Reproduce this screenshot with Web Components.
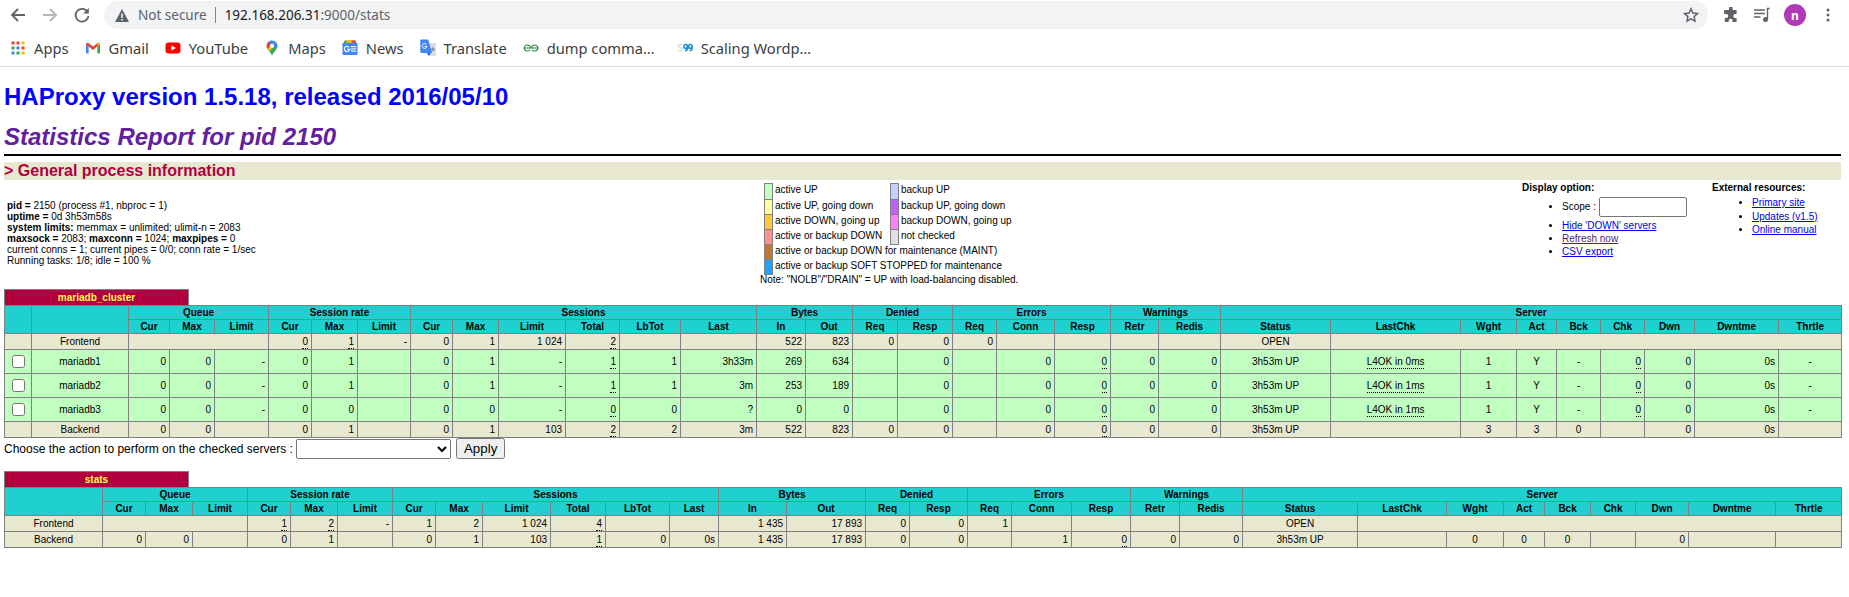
<!DOCTYPE html>
<html>
<head>
<meta charset="utf-8">
<title>Statistics Report for HAProxy</title>
<style>
    html, body { margin: 0; padding: 0; background: white; }
</style>
</head>
<body>
<browser-toolbar url-host="192.168.206.31" url-rest=":9000/stats"></browser-toolbar>
<bookmarks-bar>
    <bookmark-item icon="apps" label="Apps"></bookmark-item>
    <bookmark-item icon="gmail" label="Gmail"></bookmark-item>
    <bookmark-item icon="youtube" label="YouTube"></bookmark-item>
    <bookmark-item icon="maps" label="Maps"></bookmark-item>
    <bookmark-item icon="news" label="News"></bookmark-item>
    <bookmark-item icon="translate" label="Translate"></bookmark-item>
    <bookmark-item icon="gfg" label="dump comma…"></bookmark-item>
    <bookmark-item icon="sg" label="Scaling Wordp…" style="margin-left: 6px"></bookmark-item>
</bookmarks-bar>
<stats-page>
    <process-info slot="proc"></process-info>
    <status-legend slot="legend"></status-legend>
    <display-options slot="opts"></display-options>
    <stat-table proxy="mariadb_cluster"></stat-table>
    <stat-table proxy="stats"></stat-table>
</stats-page>

<script>
const ICONS = {
    apps: `<svg width="16" height="16" viewBox="0 0 16 16">
        <rect x="1.5" y="1.5" width="3" height="3" fill="#ea4335"/><rect x="6.5" y="1.5" width="3" height="3" fill="#ea4335"/><rect x="11.5" y="1.5" width="3" height="3" fill="#fbbc04"/>
        <rect x="1.5" y="6.5" width="3" height="3" fill="#34a853"/><rect x="6.5" y="6.5" width="3" height="3" fill="#4285f4"/><rect x="11.5" y="6.5" width="3" height="3" fill="#ea4335"/>
        <rect x="1.5" y="11.5" width="3" height="3" fill="#4285f4"/><rect x="6.5" y="11.5" width="3" height="3" fill="#34a853"/><rect x="11.5" y="11.5" width="3" height="3" fill="#fbbc04"/></svg>`,
    gmail: `<svg width="16" height="16" viewBox="0 0 16 16">
        <path d="M1 13.5V4l2.6 1.8v7.7H2a1 1 0 0 1-1-1z" fill="#4285f4"/><path d="M15 13.5V4l-2.6 1.8v7.7H14a1 1 0 0 0 1-1z" fill="#34a853"/>
        <path d="M1 4.5C1 3 2.6 2.4 3.6 3.2L8 6.6l4.4-3.4c1-.8 2.6-.2 2.6 1.3L12.4 6.6 8 9.9 3.6 6.6z" fill="#ea4335"/><path d="M12.4 3.2c1-.8 2.6-.2 2.6 1.3l-2.6 2.1z" fill="#fbbc04"/></svg>`,
    youtube: `<svg width="16" height="16" viewBox="0 0 16 16"><rect x="0.5" y="2.5" width="15" height="11" rx="3" fill="#f00"/><path d="M6.4 5.4v5.2L11 8z" fill="#fff"/></svg>`,
    maps: `<svg width="16" height="16" viewBox="0 0 16 16">
        <path d="M8 0.5a5.6 5.6 0 0 0-5.6 5.6c0 1.3.5 2.4 1.2 3.4l2.7-3.2z" fill="#ea4335"/>
        <path d="M8 0.5a5.6 5.6 0 0 1 4.3 2L9.6 5.6A2 2 0 0 0 6.5 4.3L4.2 2.2A5.6 5.6 0 0 1 8 0.5z" fill="#4285f4"/>
        <path d="M12.3 2.5a5.6 5.6 0 0 1 .6 6L6.4 6.3z" fill="#4285f4"/>
        <path d="M3.6 9.5l5.9-7 .1 4-3.2 3.7z" fill="#fbbc04"/>
        <path d="M3.6 9.5c1.5 2 3.6 3.4 4.4 6.2.7-2.6 3-4.2 4.7-7L9.6 6.5 5.9 10.8z" fill="#34a853"/>
        <circle cx="8" cy="6" r="2" fill="#fff"/></svg>`,
    news: `<svg width="18" height="18" viewBox="0 0 18 18">
        <rect x="2.5" y="0.5" width="13" height="5" rx="1" fill="#34a853"/><rect x="9" y="0.5" width="6.5" height="5" rx="1" fill="#ea4335"/><rect x="5" y="0" width="6" height="4" fill="#fbbc04"/>
        <rect x="0.5" y="3" width="17" height="14" rx="1.5" fill="#4285f4"/>
        <path d="M10 7.5h6M10 10h6M10 12.5h6" stroke="#e8f0fe" stroke-width="1.3"/><path d="M8 8.2a3 3 0 1 0 .6 2.4H5.800" fill="none" stroke="#fff" stroke-width="1.3"/></svg>`,
    translate: `<svg width="16" height="18" viewBox="0 0 16 18">
        <path d="M7 4h8a1 1 0 0 1 1 1v11a1 1 0 0 1-1 1H8.500z" fill="#dadce0"/><path d="M1 0.5h7.200L12 14H1.500A1.200 1.200 0 0 1 0.300 12.800V1.200A.8.8 0 0 1 1 .5z" fill="#4285f4"/>
        <path d="M7 14l1.500 3L11 14z" fill="#3367d6"/><path d="M6.600 5.600a2.400 2.400 0 1 0 .4 2H4.600" fill="none" stroke="#fff" stroke-width="1"/><path d="M12.800 7.600l.7 2h2l-1.600 1.200.6 2-1.700-1.200-1.600 1.200.6-2-1.600-1.200h2z" fill="#80868b"/></svg>`,
    gfg: `<svg width="16" height="16" viewBox="0 0 16 16"><g fill="none" stroke="#2f8d46" stroke-width="1.100"><path d="M0.600 8h14.800"/><path d="M7.700 8C7.200 5.800 5.800 5 4.400 5 2.600 5 1.300 6.300 1.300 8s1.300 3 3.100 3c1.100 0 2-.4 2.600-1.200"/><path d="M8.300 8c.5-2.200 1.900-3 3.300-3 1.800 0 3.100 1.300 3.100 3s-1.300 3-3.100 3c-1.100 0-2-.4-2.600-1.200"/></g></svg>`,
    sg: `<svg width="16" height="16" viewBox="0 0 16 16"><path d="M5 5.500C4.500 4.700 3.800 4.400 3 4.400 1.900 4.400 1.200 5 1.200 5.900c0 2 3.900 1.200 3.900 3.400 0 1-.9 1.700-2 1.700-.9 0-1.700-.4-2.200-1.200" fill="none" stroke="#cfd4d8" stroke-width="1.200"/><circle cx="8.700" cy="6.400" r="1.800" fill="none" stroke="#1a8fd6" stroke-width="1.500"/><path d="M10.500 6.400v1.800c0 1.300-.8 2.400-2.600 2.400" fill="none" stroke="#1a8fd6" stroke-width="1.500"/><circle cx="13.300" cy="6.400" r="1.800" fill="none" stroke="#1a8fd6" stroke-width="1.500"/><path d="M15.100 6.400v1.800c0 1.300-.8 2.400-2.600 2.400" fill="none" stroke="#1a8fd6" stroke-width="1.500"/></svg>`
};

class BrowserToolbar extends HTMLElement {
    constructor() {
        super();
        this.attachShadow({ mode: 'open' });
        this.shadowRoot.innerHTML = `
            <style>
                :host {
                    display: flex;
                    align-items: center;
                    height: 30px;
                    font-family: "Noto Sans", sans-serif;
                    font-size: 13.5px;
                    background: white;
                }
                .nav { width: 32px; height: 30px; display: flex; align-items: center; justify-content: center; flex: none; }
                .navs { display: flex; padding-left: 2px; margin-right: 6px; }
                #omnibox {
                    flex: none;
                    width: 1604px;
                    height: 28px;
                    border-radius: 14px;
                    background: #f1f3f4;
                    display: flex;
                    align-items: center;
                    padding-left: 10px;
                    box-sizing: border-box;
                }
                #warn { margin-right: 8px; display: flex; }
                #insecure { color: #5f6368; }
                #sep { width: 1px; height: 16px; background: #80868b; margin: 0 9px 0 8px; }
                #host { color: #202124; }
                #rest { color: #5f6368; }
                #star { margin-left: auto; margin-right: 9px; display: flex; }
                .tools { display: flex; align-items: center; }
                .tool { display: flex; justify-content: center; align-items: center; flex: none; }
                #avatar {
                    width: 22px; height: 22px; border-radius: 50%;
                    background: #af39b7; color: white;
                    font: bold 12px "Noto Sans", sans-serif;
                    display: flex; align-items: center; justify-content: center;
                }
            </style>
            <div class="navs">
                <div class="nav"><svg width="16" height="16" viewBox="0 0 16 16"><path d="M15 8H2.500M8 2L2 8l6 6" fill="none" stroke="#5f6368" stroke-width="1.900"/></svg></div>
                <div class="nav"><svg width="16" height="16" viewBox="0 0 16 16"><path d="M1 8h12.500M8 2l6 6-6 6" fill="none" stroke="#b3b6b9" stroke-width="1.900"/></svg></div>
                <div class="nav"><svg width="16" height="16" viewBox="0 0 16 16"><path d="M13.700 5.200A6.400 6.400 0 1 0 14.400 9" fill="none" stroke="#5f6368" stroke-width="1.800"/><path d="M14.800 1v5.600H9.200z" fill="#5f6368"/></svg></div>
            </div>
            <div id="omnibox">
                <span id="warn"><svg width="16" height="15" viewBox="0 0 16 15"><path d="M8 1L1 14h14zM7.200 5.500h1.600v4.500H7.200zM7.200 11h1.600v1.600H7.200z" fill="#5f6368" fill-rule="evenodd"/></svg></span>
                <span id="insecure">Not secure</span><span id="sep"></span>
                <span id="host"></span><span id="rest"></span>
                <span id="star"><svg width="16" height="16" viewBox="0 0 16 16"><path d="M8 1.800l1.900 4.200 4.600.5-3.400 3.100.9 4.500L8 11.800l-4 2.300.9-4.500L1.500 6.500 6.100 6z" fill="none" stroke="#5f6368" stroke-width="1.500"/></svg></span>
            </div>
            <div class="tools">
                <div class="tool" style="width:46px"><svg width="16" height="16" viewBox="0 0 16 16"><path d="M6 1.200a1.800 1.800 0 0 1 3.600 0V3h3a1 1 0 0 1 1 1v3h-1.400a2 2 0 0 0 0 4h1.400v3a1 1 0 0 1-1 1H9.500v-1.300a1.900 1.900 0 0 0-3.800 0V15H2.800a1 1 0 0 1-1-1v-3h1.400a2 2 0 0 0 0-4H1V4a1 1 0 0 1 1-1h4z" fill="#5f6368"/></svg></div>
                <div class="tool" style="width:17px"><svg width="17" height="16" viewBox="0 0 17 16"><path d="M0 3h11M0 6.500h11M0 10h6.500" stroke="#5f6368" stroke-width="1.400"/><path d="M15.500 1.500h-2V12" fill="none" stroke="#5f6368" stroke-width="1.400"/><circle cx="11.500" cy="12.500" r="2.500" fill="#5f6368"/></svg></div>
                <div class="tool" style="width:48px"><div id="avatar">n</div></div>
                <div class="tool" style="width:17px"><svg width="4" height="14" viewBox="0 0 4 14"><circle cx="2" cy="2" r="1.500" fill="#5f6368"/><circle cx="2" cy="7" r="1.500" fill="#5f6368"/><circle cx="2" cy="12" r="1.500" fill="#5f6368"/></svg></div>
            </div>
        `;
        this.shadowRoot.querySelector('#host').textContent = this.getAttribute('url-host');
        this.shadowRoot.querySelector('#rest').textContent = this.getAttribute('url-rest');
    }
}
customElements.define('browser-toolbar', BrowserToolbar);

class BookmarksBar extends HTMLElement {
    constructor() {
        super();
        this.attachShadow({ mode: 'open' });
        this.shadowRoot.innerHTML = `
            <style>
                :host {
                    display: flex;
                    align-items: center;
                    height: 35px;
                    padding: 0 0 1px 2px;
                    border-bottom: 1px solid #dadce0;
                    font-family: "Noto Sans", sans-serif;
                    font-size: 14.7px;
                    color: #3c4043;
                    background: white;
                }
            </style>
            <slot></slot>
        `;
    }
}
customElements.define('bookmarks-bar', BookmarksBar);

class BookmarkItem extends HTMLElement {
    constructor() {
        super();
        this.attachShadow({ mode: 'open' });
        const icon = ICONS[this.getAttribute('icon')] || '';
        this.shadowRoot.innerHTML = `
            <style>
                :host { display: flex; align-items: center; gap: 8px; padding: 0 8px; white-space: nowrap; }
                .ic { display: flex; width: 16px; justify-content: center; }
            </style>
            <span class="ic">${icon}</span><span id="label"></span>
        `;
        this.shadowRoot.querySelector('#label').textContent = this.getAttribute('label');
    }
}
customElements.define('bookmark-item', BookmarkItem);

class StatsPage extends HTMLElement {
    constructor() {
        super();
        this.attachShadow({ mode: 'open' });
        this.shadowRoot.innerHTML = `
            <style>
                :host {
                    display: block;
                    padding: 0 8px 0 4px;
                    font-family: "Liberation Sans", Arial, sans-serif;
                    font-size: 12px;
                    color: black;
                }
                h1 { font-size: 24px; line-height: 28px; font-weight: bold; color: blue; margin: 16px 0 12px; }
                h2 { font-size: 24px; line-height: 28px; font-weight: bold; font-style: italic; color: #6020a0; margin: 0; }
                hr { height: 2px; background: black; border: 0; margin: 3px 0 6px; }
                h3 { font-size: 16px; line-height: 18px; font-weight: bold; color: #b00040; background: #e8e8d0; margin: 0; }
                #info { display: flex; height: 109px; font-size: 10px; }
            </style>
            <h1>HAProxy version 1.5.18, released 2016/05/10</h1>
            <h2>Statistics Report for pid 2150</h2>
            <hr>
            <h3>&gt; General process information</h3>
            <div id="info"><slot name="proc"></slot><slot name="legend"></slot><slot name="opts"></slot></div>
            <slot></slot>
        `;
    }
}
customElements.define('stats-page', StatsPage);

class ProcessInfo extends HTMLElement {
    constructor() {
        super();
        this.attachShadow({ mode: 'open' });
        this.shadowRoot.innerHTML = `
            <style>
                :host { display: block; flex: none; width: 756px; box-sizing: border-box; padding: 20px 0 0 3px; font-size: 10px; line-height: 11px; }
            </style>
            <b>pid = </b>2150 (process #1, nbproc = 1)<br>
            <b>uptime = </b>0d 3h53m58s<br>
            <b>system limits:</b> memmax = unlimited; ulimit-n = 2083<br>
            <b>maxsock = </b>2083; <b>maxconn = </b>1024; <b>maxpipes = </b>0<br>
            current conns = 1; current pipes = 0/0; conn rate = 1/sec<br>
            Running tasks: 1/8; idle = 100 %
        `;
    }
}
customElements.define('process-info', ProcessInfo);

class StatusLegend extends HTMLElement {
    constructor() {
        super();
        this.attachShadow({ mode: 'open' });
        const left = [['#c0ffc0', 'active UP'], ['#ffffa0', 'active UP, going down'], ['#ffc840', 'active DOWN, going up'], ['#ff9090', 'active or backup DOWN']];
        const right = [['#c0d0ff', 'backup UP'], ['#c060ff', 'backup UP, going down'], ['#ff80ff', 'backup DOWN, going up'], ['#e0e0e0', 'not checked']];
        const wide = [['#c07830', 'active or backup DOWN for maintenance (MAINT)'], ['#20a0ff', 'active or backup SOFT STOPPED for maintenance']];
        const row = ([color, text]) => `<span class="sw" style="background:${color}"></span><span>${text}</span>`;
        this.shadowRoot.innerHTML = `
            <style>
                :host { display: block; flex: none; width: 762px; box-sizing: border-box; padding-top: 3px; font-size: 10px; line-height: 11px; }
                #legend { display: grid; grid-template-columns: 8px 112px 8px auto; grid-template-rows: 16px repeat(5, 15px); column-gap: 3px; margin-left: 4px; width: max-content; }
                .sw { border: 1px solid gray; box-sizing: border-box; width: 9px; height: calc(100% + 1px); }
                span:not(.sw) { align-self: start; margin-top: 1px; line-height: 12px; white-space: nowrap; }
                .w { grid-column: 2 / 5; }
                #note { white-space: nowrap; }
            </style>
            <div id="legend">
                ${left.map((l, i) => row(l) + row(right[i])).join('')}
                ${wide.map(([c, t]) => `<span class="sw" style="background:${c}"></span><span class="w">${t}</span>`).join('')}
            </div>
            <div id="note">Note: "NOLB"/"DRAIN" = UP with load-balancing disabled.</div>
        `;
    }
}
customElements.define('status-legend', StatusLegend);

class DisplayOptions extends HTMLElement {
    constructor() {
        super();
        this.attachShadow({ mode: 'open' });
        this.shadowRoot.innerHTML = `
            <style>
                :host { display: flex; flex: 1; font-size: 10px; line-height: 13px; padding-top: 1px; }
                #display { width: 190px; flex: none; }
                ul { margin: 0; padding: 0 0 0 40px; }
                #external ul { margin-top: -1px; }
                a { color: #0000ee; text-decoration: underline; }
                a.seen { color: #551a8b; }
                input { width: 88px; height: 20px; box-sizing: border-box; border: 1px solid #767676; border-radius: 2px; padding: 0; margin: 0; vertical-align: middle; }
                .scope { height: 22px; line-height: 20px; }
                b { display: block; margin-bottom: 3px; }
                #external li { height: 13.5px; }
            </style>
            <div id="display">
                <b>Display option:</b>
                <ul>
                    <li class="scope">Scope : <input></li>
                    <li><a href="#">Hide 'DOWN' servers</a></li>
                    <li><a href="#" class="seen">Refresh now</a></li>
                    <li><a href="#">CSV export</a></li>
                </ul>
            </div>
            <div id="external">
                <b>External resources:</b>
                <ul>
                    <li><a href="#">Primary site</a></li>
                    <li><a href="#">Updates (v1.5)</a></li>
                    <li><a href="#">Online manual</a></li>
                </ul>
            </div>
        `;
    }
}
customElements.define('display-options', DisplayOptions);

// "_x" is an underlined tip value, "" an empty cell, [n] an empty cell spanning n columns
const PROXIES = {
    mariadb_cluster: {
        action: true,
        edges: [4, 31, 128, 169, 214, 268, 311, 357, 410, 452, 498, 565, 619, 680, 756, 805, 852, 897, 952, 996, 1054, 1110, 1158, 1220, 1330, 1460, 1516, 1556, 1600, 1644, 1694, 1778, 1841],
        rows: [
            ['fe', 'Frontend', [3], '_0', '_1', '-', '0', '1', '1 024', '_2', '', '', '522', '823', '0', '0', '0', '', '', '', '', 'OPEN', [8]],
            ['up', 'mariadb1', '0', '0', '-', '0', '1', '', '0', '1', '-', '_1', '1', '3h33m', '269', '634', '', '0', '', '0', '_0', '0', '0', '3h53m UP', '_L4OK in 0ms', '1', 'Y', '-', '_0', '0', '0s', '-'],
            ['up', 'mariadb2', '0', '0', '-', '0', '1', '', '0', '1', '-', '_1', '1', '3m', '253', '189', '', '0', '', '0', '_0', '0', '0', '3h53m UP', '_L4OK in 1ms', '1', 'Y', '-', '_0', '0', '0s', '-'],
            ['up', 'mariadb3', '0', '0', '-', '0', '0', '', '0', '0', '-', '_0', '0', '?', '0', '0', '', '0', '', '0', '_0', '0', '0', '3h53m UP', '_L4OK in 1ms', '1', 'Y', '-', '_0', '0', '0s', '-'],
            ['be', 'Backend', '0', '0', '', '0', '1', '', '0', '1', '103', '_2', '2', '3m', '522', '823', '0', '0', '', '0', '_0', '0', '0', '3h53m UP', '', '3', '3', '0', '', '0', '0s', '']
        ]
    },
    stats: {
        action: false,
        edges: [4, 102, 145, 192, 247, 290, 337, 392, 435, 482, 550, 605, 669, 718, 786, 865, 909, 967, 1011, 1071, 1130, 1179, 1242, 1357, 1446, 1503, 1544, 1590, 1635, 1688, 1775, 1841],
        rows: [
            ['fe', 'Frontend', [3], '_1', '_2', '-', '1', '2', '1 024', '_4', '', '', '1 435', '17 893', '0', '0', '1', '', '', '', '', 'OPEN', [8]],
            ['be', 'Backend', '0', '0', '', '0', '1', '', '0', '1', '103', '_1', '0', '0s', '1 435', '17 893', '0', '0', '', '1', '_0', '0', '0', '3h53m UP', '', '0', '0', '0', '', '0', '', '']
        ]
    }
};

const GROUPS = [
    ['Queue', ['Cur', 'Max', 'Limit']],
    ['Session rate', ['Cur', 'Max', 'Limit']],
    ['Sessions', ['Cur', 'Max', 'Limit', 'Total', 'LbTot', 'Last']],
    ['Bytes', ['In', 'Out']],
    ['Denied', ['Req', 'Resp']],
    ['Errors', ['Req', 'Conn', 'Resp']],
    ['Warnings', ['Retr', 'Redis']],
    ['Server', ['Status', 'LastChk', 'Wght', 'Act', 'Bck', 'Chk', 'Dwn', 'Dwntme', 'Thrtle']]
];
const CENTERED = [21, 22, 23, 24, 25, 29]; // Status, LastChk, Wght, Act, Bck, Thrtle, counted after the name

class StatTable extends HTMLElement {
    constructor() {
        super();
        this.attachShadow({ mode: 'open' });
    }

    connectedCallback() {
        const name = this.getAttribute('proxy');
        const proxy = PROXIES[name];
        const widths = proxy.edges.slice(1).map((e, i) => e - proxy.edges[i]);
        const check = proxy.action;
        const colgroup = widths.map(w => `<col style="width:${w}px">`).join('');

        const head1 = (check ? '<th rowspan="2"></th>' : '') + '<th rowspan="2"></th>' +
            GROUPS.map(([g, cols]) => `<th colspan="${cols.length}">${g}</th>`).join('');
        const head2 = GROUPS.map(([, cols]) => cols.map(c => `<th>${c}</th>`).join('')).join('');

        const rows = proxy.rows.map(([kind, label, ...cells]) => {
            let idx = 0;
            const tds = cells.map(c => {
                if (Array.isArray(c)) {
                    idx += c[0];
                    return `<td colspan="${c[0]}"></td>`;
                }
                const cls = CENTERED.includes(idx) ? 'c' : '';
                idx++;
                const text = c.startsWith('_') ? `<span class="tip">${c.slice(1)}</span>` : c;
                return `<td class="${cls}">${text}</td>`;
            }).join('');
            const box = !check ? '' : (kind === 'up' ? '<td class="c"><input type="checkbox"></td>' : '<td></td>');
            return `<tr class="${kind}">${box}<td class="c">${label}</td>${tds}</tr>`;
        }).join('');

        const action = !check ? '' : `
            <div id="action">Choose the action to perform on the checked servers : <select><option></option></select><button>Apply</button></div>`;

        this.shadowRoot.innerHTML = `
            <style>
                :host { display: block; margin-bottom: ${check ? 12 : 0}px; }
                #title {
                    width: 185px; height: 16px; box-sizing: border-box;
                    border: 1px solid gray; border-bottom: 0;
                    background: #b00040; color: #ffff40;
                    font-weight: bold; font-size: 10px; line-height: 15px; text-align: center;
                }
                table {
                    border-collapse: collapse; table-layout: fixed;
                    width: ${proxy.edges[proxy.edges.length - 1] - proxy.edges[0]}px;
                    font-size: 10px; line-height: 11px;
                }
                th, td { border: 1px solid gray; padding: 0 3px; overflow: hidden; white-space: nowrap; }
                th { background: #20d0d0; font-weight: bold; text-align: center; height: 13px; }
                td { text-align: right; }
                td.c { text-align: center; }
                tr.fe td, tr.be td { background: #e8e8d0; height: 15px; }
                tr.up td { background: #c0ffc0; height: 23px; }
                .tip { border-bottom: 1px dotted black; padding-bottom: 1px; }
                input[type=checkbox] { margin: 0; width: 13px; height: 13px; vertical-align: middle; }
                #action { display: flex; align-items: center; height: 21px; font-size: 12px; white-space: pre; }
                select { width: 155px; height: 20px; padding: 0; font-family: inherit; }
                button { width: 49px; height: 21px; margin-left: 5px; padding: 0; font: 13.33px "Liberation Sans", sans-serif; }
            </style>
            <div id="title"></div>
            <table>
                <colgroup>${colgroup}</colgroup>
                <thead><tr>${head1}</tr><tr>${head2}</tr></thead>
                <tbody>${rows}</tbody>
            </table>
            ${action}
        `;
        this.shadowRoot.querySelector('#title').textContent = name;
    }
}
customElements.define('stat-table', StatTable);
</script>
</body>
</html>
